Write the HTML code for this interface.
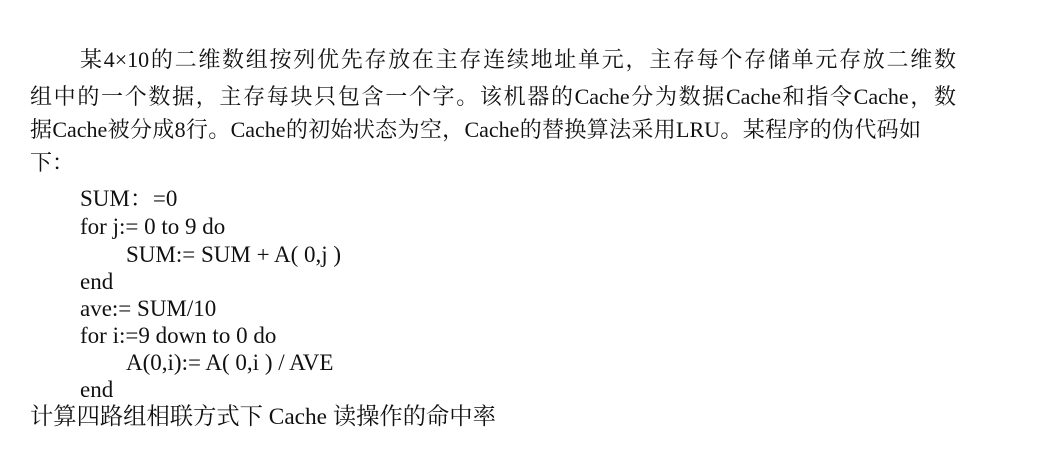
<!DOCTYPE html>
<html><head><meta charset="utf-8"><style>
body{margin:0;width:1040px;height:452px;background:#fff;position:relative;overflow:hidden;color:#111;}
.l{position:absolute;font-family:"Liberation Serif","Noto Serif CJK SC",serif;font-size:22px;white-space:nowrap;line-height:1;}
.j{text-align:justify;text-align-last:justify;white-space:normal;}
.c{position:absolute;font-family:"Liberation Serif","Noto Serif CJK SC",serif;font-size:23px;white-space:pre;line-height:1;}
</style></head><body>
<div class="l j" style="left:80px;top:49px;width:876px">某4×10的二维数组按列优先存放在主存连续地址单元，主存每个存储单元存放二维数</div>
<div class="l j" style="left:30px;top:86px;width:926px">组中的一个数据，主存每块只包含一个字。该机器的Cache分为数据Cache和指令Cache，数</div>
<div class="l j" style="left:30px;top:119px;width:891px">据Cache被分成8行。Cache的初始状态为空，Cache的替换算法采用LRU。某程序的伪代码如</div>
<div class="l" style="left:30px;top:152px;">下：</div>
<div class="c" style="left:80px;top:187px;">SUM：=0</div>
<div class="c" style="left:80px;top:215px;">for j:= 0 to 9 do</div>
<div class="c" style="left:126px;top:243px;">SUM:= SUM + A( 0,j )</div>
<div class="c" style="left:80px;top:270px;">end</div>
<div class="c" style="left:80px;top:297px;">ave:= SUM/10</div>
<div class="c" style="left:80px;top:324px;">for i:=9 down to 0 do</div>
<div class="c" style="left:126px;top:351px;">A(0,i):= A( 0,i ) / AVE</div>
<div class="c" style="left:80px;top:378px;">end</div>
<div class="l" style="left:30px;top:406px;font-size:23.3px;">计算四路组相联方式下 Cache 读操作的命中率</div>
</body></html>
